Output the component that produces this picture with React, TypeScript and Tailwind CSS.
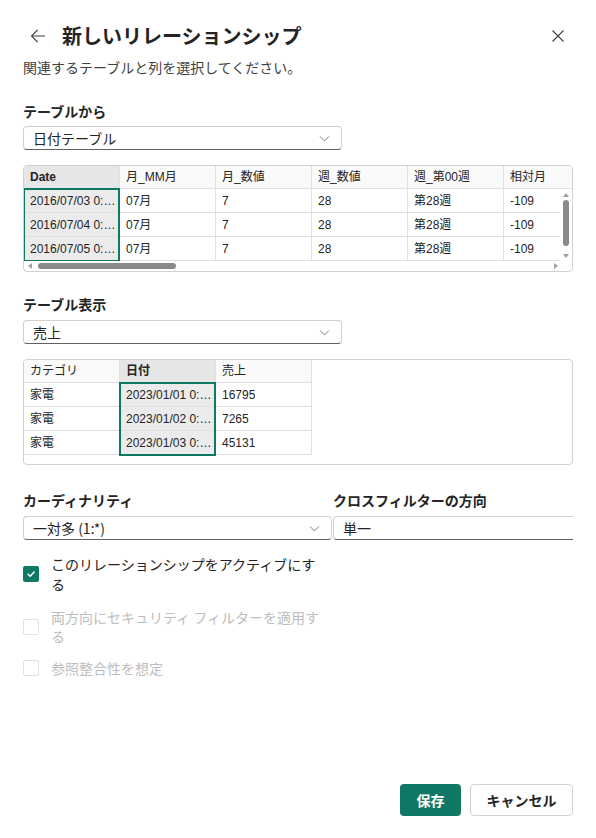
import React from 'react'

const GREEN = '#117865'

type Column = { name: string; cells: string[] }

// Table 1 data - Date column selected
const fromColumns: Column[] = [
  { name: 'Date', cells: ['2016/07/03 0:00:00', '2016/07/04 0:00:00', '2016/07/05 0:00:00'] },
  { name: '月_MM月', cells: ['07月', '07月', '07月'] },
  { name: '月_数値', cells: ['7', '7', '7'] },
  { name: '週_数値', cells: ['28', '28', '28'] },
  { name: '週_第00週', cells: ['第28週', '第28週', '第28週'] },
  { name: '相対月', cells: ['-109', '-109', '-109'] },
  { name: '相対週', cells: ['-470', '-470', '-470'] },
]

const toColumns: Column[] = [
  { name: 'カテゴリ', cells: ['家電', '家電', '家電'] },
  { name: '日付', cells: ['2023/01/01 0:00:00', '2023/01/02 0:00:00', '2023/01/03 0:00:00'] },
  { name: '売上', cells: ['16795', '7265', '45131'] },
]

const Chevron = () => (
  <svg className="w-[13px] h-[13px] text-[#616161]" viewBox="0 0 16 16" fill="none" stroke="currentColor" strokeWidth="1">
    <path d="M2.5 5.5 8 11l5.5-5.5" />
  </svg>
)

function Dropdown({ value, className = '' }: { value: string; className?: string }) {
  return (
    <div
      className={`h-[24px] flex items-center justify-between pl-[9px] pr-[10px] rounded-[4px] border border-[#d1d1d1] border-b-[#616161] bg-white text-[14px] text-[#242424] ${className}`}
    >
      <span className="leading-none">{value}</span>
      <Chevron />
    </div>
  )
}

function GridColumn({ col, selected }: { col: Column; selected: string }) {
  const isSel = col.name === selected
  return (
    <div className="w-[96px] shrink-0 flex flex-col border-r border-[#e0e0e0] font-['Liberation_Sans','Noto_Sans_CJK_JP',sans-serif]">
      <div
        className={`h-[23px] flex items-center pl-[6px] pr-[2px] border-b border-[#e0e0e0] text-[12px] ${
          isSel ? 'bg-[#e6e6e6] font-bold' : 'bg-[#fafafa]'
        }`}
      >
        <span className="truncate">{col.name}</span>
      </div>
      <div className={isSel ? 'bg-[#ebebeb] outline-2 outline-[#117865] -outline-offset-1 relative' : ''}>
        {col.cells.map((c, i) => (
          <div key={i} className="h-[24px] flex items-center pl-[6px] pr-[2px] border-b border-[#e0e0e0] text-[12px]">
            <span className="truncate">{c}</span>
          </div>
        ))}
      </div>
    </div>
  )
}

const Tri = ({ dir }: { dir: 'up' | 'down' | 'left' | 'right' }) => {
  const d = {
    up: 'M0 4 3 0 6 4Z',
    down: 'M0 0 6 0 3 4Z',
    left: 'M4 0 4 6 0 3Z',
    right: 'M0 0 4 3 0 6Z',
  }[dir]
  const vert = dir === 'up' || dir === 'down'
  return (
    <svg className={vert ? 'w-[6px] h-[4px]' : 'w-[4px] h-[6px]'} viewBox={vert ? '0 0 6 4' : '0 0 4 6'} fill="#a0a0a0">
      <path d={d} />
    </svg>
  )
}

export default function App() {
  return (
    <div className="w-[596px] h-[838px] bg-white flex flex-col px-[23px] text-[#242424] font-['Noto_Sans_CJK_JP',sans-serif]">
      {/* Header */}
      <div className="pt-[22px] h-[50px] flex items-center">
        <svg className="ml-[7px] w-[16px] h-[16px] text-[#424242]" viewBox="0 0 16 16" fill="none" stroke="currentColor" strokeWidth="1.1">
          <path d="M15 8H1.5M7.5 2 1.5 8l6 6" />
        </svg>
        <h1 className="ml-[16px] text-[20px] font-bold leading-[28px]">新しいリレーションシップ</h1>
        <svg className="ml-auto mr-[9px] w-[12px] h-[12px] text-[#424242]" viewBox="0 0 12 12" fill="none" stroke="currentColor" strokeWidth="1.1">
          <path d="M0.5 0.5l11 11M11.5 0.5l-11 11" />
        </svg>
      </div>
      <p className="mt-[7px] text-[14px] leading-[20px] text-[#424242]">関連するテーブルと列を選択してください。</p>

      {/* From table */}
      <div className="mt-[24px] text-[14px] leading-[20px] font-bold">テーブルから</div>
      <Dropdown value="日付テーブル" className="mt-[5px] w-[319px]" />

      <div className="mt-[15px] h-[107px] rounded-[4px] border border-[#d1d1d1] overflow-hidden flex flex-col">
        <div className="flex">
          <div className="w-[536px] flex overflow-hidden">
            {fromColumns.map(col => (
              <GridColumn key={col.name} col={col} selected="Date" />
            ))}
          </div>
          <div className="w-[12px] flex flex-col">
            <div className="h-[23px] bg-[#fafafa] border-b border-[#e0e0e0]" />
            <div className="flex-1 flex flex-col items-center pt-[4px] pb-[3px]">
              <Tri dir="up" />
              <div className="mt-[3px] w-[6px] h-[46px] rounded-full bg-[#8a8a8a]" />
              <div className="flex-1" />
              <Tri dir="down" />
            </div>
          </div>
        </div>
        <div className="h-[10px] flex items-center pl-[4px] pr-[14px]">
          <Tri dir="left" />
          <div className="ml-[6px] w-[138px] h-[6px] rounded-full bg-[#8a8a8a]" />
          <div className="flex-1" />
          <Tri dir="right" />
        </div>
      </div>

      {/* To table */}
      <div className="mt-[22px] text-[14px] leading-[20px] font-bold">テーブル表示</div>
      <Dropdown value="売上" className="mt-[6px] w-[319px]" />

      <div className="mt-[15px] h-[106px] rounded-[4px] border border-[#d1d1d1] overflow-hidden">
        <div className="flex w-fit">
          {toColumns.map(col => (
            <GridColumn key={col.name} col={col} selected="日付" />
          ))}
        </div>
      </div>

      {/* Cardinality / cross filter */}
      <div className="mt-[25px] flex">
        <div className="w-[310px] shrink-0">
          <div className="text-[14px] leading-[20px] font-bold">カーディナリティ</div>
          <Dropdown value="一対多 (1:*)" className="mt-[6px] w-[309px]" />
        </div>
        <div className="flex-1 overflow-hidden">
          <div className="text-[14px] leading-[20px] font-bold">クロスフィルターの方向</div>
          <Dropdown value="単一" className="mt-[6px] w-[300px]" />
        </div>
      </div>

      {/* Options */}
      <div className="mt-[14px] flex items-center">
        <div className="w-[16px] h-[16px] shrink-0 rounded-[2px] bg-[#117865] flex items-center justify-center">
          <svg className="w-[10px] h-[10px]" viewBox="0 0 12 12" fill="none" stroke="white" strokeWidth="1.8" strokeLinecap="round" strokeLinejoin="round">
            <path d="M2.5 6.3 5 8.7 9.7 3.6" />
          </svg>
        </div>
        <span className="ml-[12px] w-[270px] shrink-0 text-[14px] leading-[20px]">このリレーションシップをアクティブにする</span>
      </div>
      <div className="mt-[14px] flex items-center">
        <div className="w-[16px] h-[16px] shrink-0 rounded-[2px] border border-[#e0e0e0]" />
        <span className="ml-[12px] w-[270px] shrink-0 text-[14px] leading-[19px] text-[#bdbdbd]">両方向にセキュリティ フィルターを適用する</span>
      </div>
      <div className="mt-[12px] flex items-center">
        <div className="w-[16px] h-[16px] shrink-0 rounded-[2px] border border-[#e0e0e0]" />
        <span className="ml-[12px] text-[14px] leading-[20px] text-[#bdbdbd]">参照整合性を想定</span>
      </div>

      {/* Footer */}
      <div className="mt-auto pb-[22px] flex justify-end gap-[9px]">
        <button className="w-[61px] h-[32px] rounded-[4px] text-white text-[14px] font-bold" style={{ backgroundColor: GREEN }}>
          保存
        </button>
        <button className="w-[103px] h-[32px] rounded-[4px] border border-[#d1d1d1] bg-white text-[14px] font-bold text-[#242424]">
          キャンセル
        </button>
      </div>
    </div>
  )
}
